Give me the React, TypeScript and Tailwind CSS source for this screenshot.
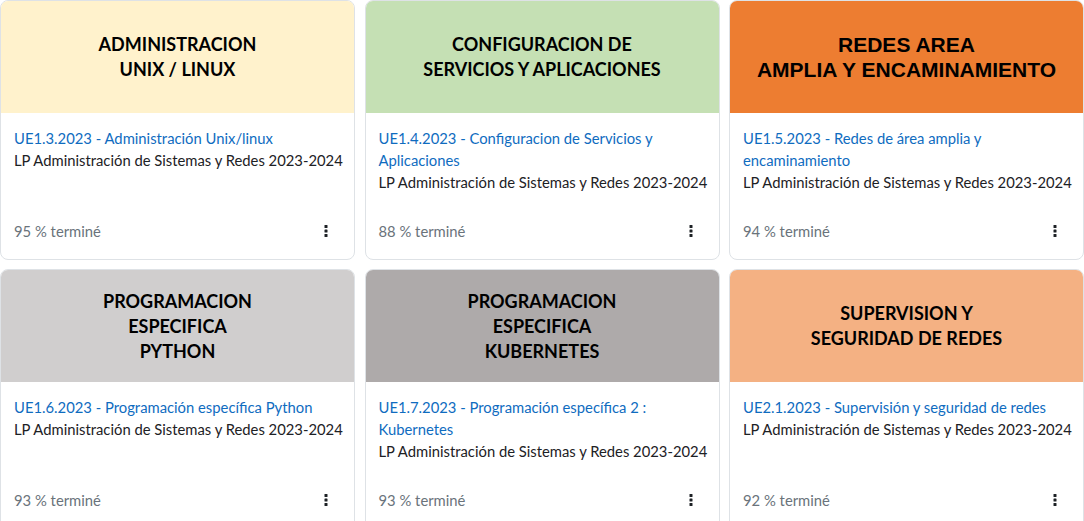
import React from "react";

type Course = {
  title: string[];
  bg: string;
  arial?: boolean;
  code: string;
  name: string;
  progress: number;
};

const courses: Course[] = [
  {
    title: ["ADMINISTRACION", "UNIX / LINUX"],
    bg: "bg-[#fff2cc]",
    code: "UE1.3.2023",
    name: "Administración Unix/linux",
    progress: 95,
  },
  {
    title: ["CONFIGURACION DE", "SERVICIOS Y APLICACIONES"],
    bg: "bg-[#c5e0b4]",
    code: "UE1.4.2023",
    name: "Configuracion de Servicios y Aplicaciones",
    progress: 88,
  },
  {
    title: ["REDES AREA", "AMPLIA Y ENCAMINAMIENTO"],
    bg: "bg-[#ed7d31]",
    arial: true,
    code: "UE1.5.2023",
    name: "Redes de área amplia y encaminamiento",
    progress: 94,
  },
  {
    title: ["PROGRAMACION", "ESPECIFICA", "PYTHON"],
    bg: "bg-[#d0cece]",
    code: "UE1.6.2023",
    name: "Programación específica Python",
    progress: 93,
  },
  {
    title: ["PROGRAMACION", "ESPECIFICA", "KUBERNETES"],
    bg: "bg-[#aeaaaa]",
    code: "UE1.7.2023",
    name: "Programación específica 2 : Kubernetes",
    progress: 93,
  },
  {
    title: ["SUPERVISION Y", "SEGURIDAD DE REDES"],
    bg: "bg-[#f4b183]",
    code: "UE2.1.2023",
    name: "Supervisión y seguridad de redes",
    progress: 92,
  },
];

function Kebab() {
  return (
    <svg width="4" height="13" viewBox="0 0 4 13" className="text-[#1d2125]">
      <rect x="0.5" y="0" width="3" height="3" rx="0.6" fill="currentColor" />
      <rect x="0.5" y="4.5" width="3" height="3" rx="0.6" fill="currentColor" />
      <rect x="0.5" y="9" width="3" height="3" rx="0.6" fill="currentColor" />
    </svg>
  );
}

function CourseCard({ c }: { c: Course }) {
  return (
    <div className="flex flex-col rounded-lg border border-[#dee2e6] bg-white overflow-hidden">
      <div
        className={`${c.bg} h-[112px] flex flex-col items-center justify-center text-center text-black font-bold ${
          c.arial
            ? "font-['Liberation_Sans',Arial,sans-serif] text-[21px] leading-[25px]"
            : "font-['Lato',sans-serif] text-[18px] leading-[25px]"
        }`}
      >
        {c.title.map((t) => (
          <div key={t}>{t}</div>
        ))}
      </div>
      <div className="flex flex-col px-[13px] pt-[14px] pb-[17px] font-['Lato',sans-serif] text-[14.8px] leading-[22px]">
        <div className="min-h-[66px]">
          <a href="#" className="text-[#0f6cbf]">
            {c.code} - {c.name}
          </a>
          <div className="whitespace-nowrap text-[#1d2125]">
            LP Administración de Sistemas y Redes 2023-2024
          </div>
        </div>
        <div className="mt-[27px] flex h-[22px] items-center justify-between">
          <span className="text-[#6a737b]">{c.progress} % terminé</span>
          <span className="mr-[13px] flex items-center">
            <Kebab />
          </span>
        </div>
      </div>
    </div>
  );
}

export default function App() {
  return (
    <main className="w-[1084px] h-[521px] overflow-hidden bg-white">
      <div className="grid grid-cols-3 gap-x-[9.5px] gap-y-[9px]">
        {courses.map((c) => (
          <CourseCard key={c.code} c={c} />
        ))}
      </div>
    </main>
  );
}
